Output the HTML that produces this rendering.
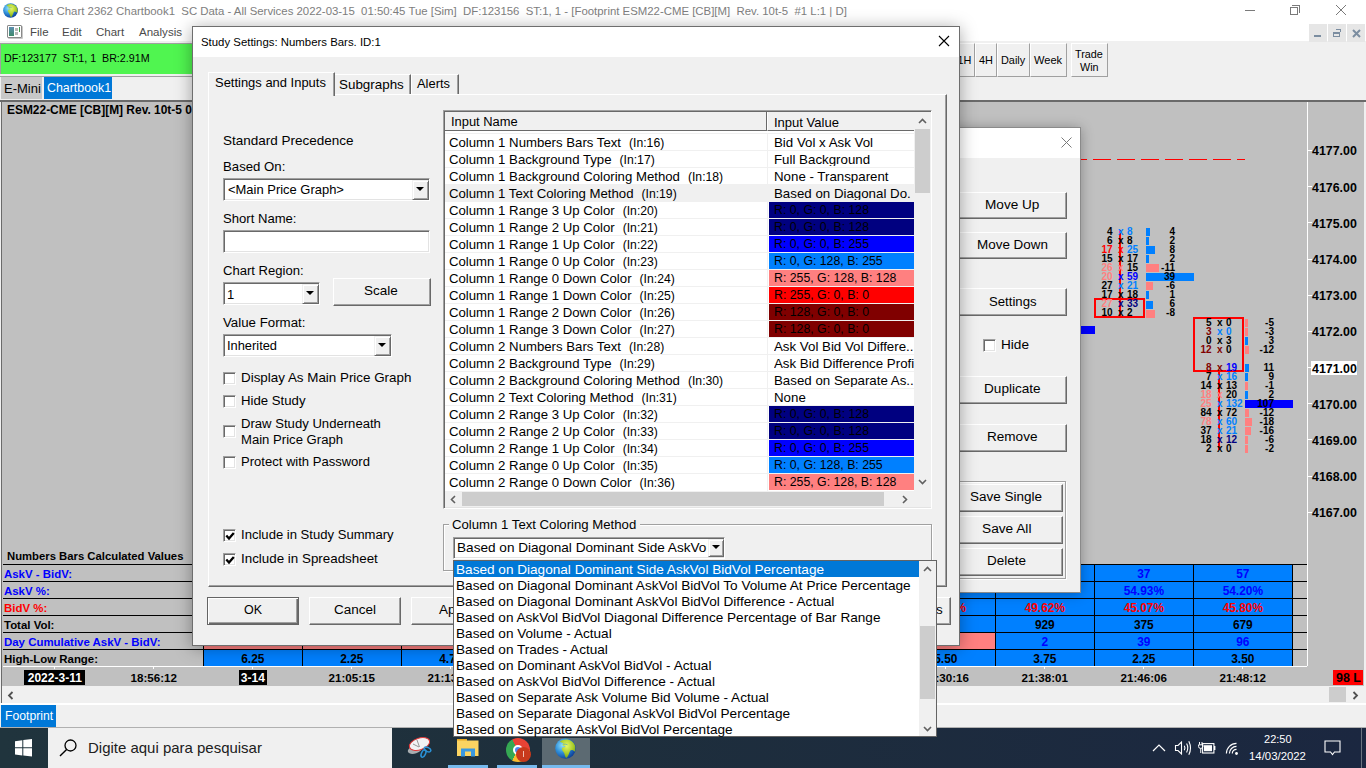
<!DOCTYPE html>
<html><head><meta charset="utf-8">
<style>
*{margin:0;padding:0;box-sizing:border-box}
html,body{width:1366px;height:768px;overflow:hidden;background:#f0f0f0;font-family:"Liberation Sans",sans-serif;color:#000}
.a{position:absolute}
.t{position:absolute;white-space:pre;line-height:1}
.b{font-weight:bold}
.btn{background:#f0f0f0;border-left:1px solid #fff;border-top:1px solid #fff;border-right:1px solid #696969;border-bottom:1px solid #696969;box-shadow:inset -1px -1px 0 #a0a0a0}
.cmb{background:#fff;border-left:1px solid #a0a0a0;border-top:1px solid #a0a0a0;border-right:1px solid #fff;border-bottom:1px solid #fff;box-shadow:inset 1px 1px 0 #696969,inset -1px -1px 0 #e3e3e3}
.dbtn{background:#f0f0f0;border-left:1px solid #f0f0f0;border-top:1px solid #f0f0f0;border-right:1px solid #696969;border-bottom:1px solid #696969;box-shadow:inset 1px 1px 0 #fff,inset -1px -1px 0 #a0a0a0}
.cb{width:13px;height:13px;background:#fff;border-left:1px solid #a0a0a0;border-top:1px solid #a0a0a0;border-right:1px solid #fff;border-bottom:1px solid #fff;box-shadow:inset 1px 1px 0 #696969,inset -1px -1px 0 #e3e3e3}
</style></head><body>
<!-- ===== MAIN WINDOW ===== -->
<div class="a" style="left:0;top:0;width:1366px;height:22px;background:#fff"></div>
<div class="t" id="title" style="left:23px;top:6px;font-size:11.4px;color:#7e7e7e">Sierra Chart 2362 Chartbook1  SC Data - All Services 2022-03-15  01:50:45 Tue [Sim]  DF:123156  ST:1, 1 - [Footprint ESM22-CME [CB][M]  Rev. 10t-5  #1 L:1 | D]</div>
<!-- menu -->
<div class="a" style="left:0;top:22px;width:1366px;height:21px;background:#fff"></div>
<div class="a" style="left:0;top:43px;width:1366px;height:1px;background:#a0a0a0"></div>
<div class="t" style="left:30px;top:27px;font-size:11.5px;color:#4a4a4a">File</div>
<div class="t" style="left:62px;top:27px;font-size:11.5px;color:#4a4a4a">Edit</div>
<div class="t" style="left:96px;top:27px;font-size:11.5px;color:#4a4a4a">Chart</div>
<div class="t" style="left:139px;top:27px;font-size:11.55px;color:#4a4a4a">Analysis</div>
<!-- menu icon -->
<div class="a" style="left:7px;top:25px;width:15px;height:13px;border:1px solid #8a8a8a;border-radius:1px;background:#fff;box-shadow:1px 1px 0 #c8c8c8"></div>
<div class="a" style="left:9px;top:27px;width:5px;height:9px;background:linear-gradient(#5d8fb0,#3e8a6a)"></div>
<div class="a" style="left:15px;top:28px;width:3px;height:3px;background:#b8b8b8"></div>
<div class="a" style="left:15px;top:32px;width:3px;height:3px;background:#b8b8b8"></div>
<div class="a" style="left:19px;top:27px;width:1px;height:5px;background:#3a9a4a"></div>
<!-- globe -->
<svg class="a" style="left:2.5px;top:3px" width="15" height="15" viewBox="0 0 20 20"><defs><radialGradient id="gb2.5" cx="35%" cy="35%" r="70%"><stop offset="0" stop-color="#8fe0ff"/><stop offset=".5" stop-color="#2f8fd8"/><stop offset="1" stop-color="#0d3f98"/></radialGradient><radialGradient id="gg2.5" cx="45%" cy="35%" r="70%"><stop offset="0" stop-color="#e6f86a"/><stop offset=".6" stop-color="#a8cc2a"/><stop offset="1" stop-color="#6a9a18"/></radialGradient></defs><circle cx="10" cy="10" r="9.8" fill="url(#gb2.5)"/><path d="M4.5 3.2Q8 1 12 1.5Q17 2.5 19 7Q19.8 10 19 13Q18 12 16.5 11.5Q14.5 11 14 13Q13 16 11.5 18.5Q10 19.5 9.5 17Q9 14 7 12Q6 10.5 7 9Q8.5 8.5 10 8.5Q9 7 7.5 7.5Q6.5 6 8 5Q6 4.5 4.5 3.2Z" fill="url(#gg2.5)"/><path d="M8 6Q10 5.5 12 6.5" stroke="#3aa0d0" stroke-width=".8" fill="none" opacity=".7"/></svg>
<!-- window controls -->
<div class="a" style="left:1245px;top:10px;width:10px;height:1px;background:#7a7a7a"></div>
<div class="a" style="left:1290px;top:7px;width:8px;height:8px;border:1px solid #7a7a7a"></div>
<div class="a" style="left:1292px;top:5px;width:8px;height:8px;border-top:1px solid #7a7a7a;border-right:1px solid #7a7a7a"></div>
<svg class="a" style="left:1335px;top:4px" width="12" height="12"><path d="M1 1L11 11M11 1L1 11" stroke="#7a7a7a" stroke-width="1"/></svg>
<!-- MDI controls -->
<div class="a" style="left:0;top:41px;width:1366px;height:60px;background:#f0f0f0"></div>
<div class="a" style="left:1309px;top:24px;width:18px;height:18px;background:#e6e6e6"></div>
<div class="a" style="left:1328px;top:24px;width:18px;height:18px;background:#e6e6e6"></div>
<div class="a" style="left:1347px;top:24px;width:18px;height:18px;background:#e6e6e6"></div>
<div class="a" style="left:1314px;top:35px;width:7px;height:2px;background:#7b8da0"></div>
<div class="a" style="left:1333px;top:32px;width:7px;height:5px;border:1px solid #7b8da0;border-top-width:2px"></div>
<div class="a" style="left:1336px;top:29px;width:5px;height:3px;border-top:1px solid #7b8da0;border-right:1px solid #7b8da0"></div>
<svg class="a" style="left:1352px;top:29px" width="9" height="9"><path d="M1 1L8 8M8 1L1 8" stroke="#7b8da0" stroke-width="2"/></svg>
<!-- toolbar buttons right -->
<div class="a btn" style="left:952px;top:43px;width:23px;height:34px;box-shadow:none;border-right-color:#a0a0a0;border-bottom-color:#a0a0a0"></div>
<div class="t" style="left:957.5px;top:55px;font-size:10.9px">1H</div>
<div class="a btn" style="left:975px;top:43px;width:22px;height:34px;box-shadow:none;border-right-color:#a0a0a0;border-bottom-color:#a0a0a0"></div>
<div class="t" style="left:979px;top:55px;font-size:10.9px">4H</div>
<div class="a btn" style="left:997px;top:43px;width:33px;height:34px;box-shadow:none;border-right-color:#a0a0a0;border-bottom-color:#a0a0a0"></div>
<div class="t" style="left:1001px;top:55px;font-size:10.9px">Daily</div>
<div class="a btn" style="left:1030px;top:43px;width:37px;height:34px;box-shadow:none;border-right-color:#a0a0a0;border-bottom-color:#a0a0a0"></div>
<div class="t" style="left:1034px;top:55px;font-size:11.1px">Week</div>
<div class="a btn" style="left:1071px;top:43px;width:37px;height:34px;box-shadow:none;border-right-color:#a0a0a0;border-bottom-color:#a0a0a0"></div>
<div class="t" style="left:1075px;top:49px;font-size:10.8px">Trade</div>
<div class="t" style="left:1080px;top:62px;font-size:10.8px">Win</div>
<!-- green status -->
<div class="a" style="left:0;top:43px;width:200px;height:31px;background:#50f550;border-left:1px solid #a0a0a0;border-top:1px solid #a0a0a0"></div>
<div class="t" style="left:4px;top:53px;font-size:10.7px">DF:123177  ST:1, 1  BR:2.91M</div>
<!-- chartbook tabs -->
<div class="a" style="left:0;top:76px;width:200px;height:1px;background:#a0a0a0"></div>
<div class="a" style="left:1px;top:77px;width:41px;height:22px;background:#c8c8c8"></div>
<div class="t" style="left:4px;top:82px;font-size:13px">E-Mini</div>
<div class="a" style="left:44px;top:77px;width:68px;height:22px;background:#0078d7"></div>
<div class="t" style="left:47px;top:82px;font-size:12.4px;color:#fff">Chartbook1</div>
<!-- chart area -->
<div class="a" style="left:0;top:100px;width:1366px;height:2px;background:#6a6a6a"></div>
<div class="a" style="left:1px;top:102px;width:1363px;height:584px;background:#c0c0c0"></div>
<div class="t b" style="left:7px;top:105px;font-size:11.95px">ESM22-CME [CB][M] Rev. 10t-5 0</div>
<!-- taskbar -->
<div class="a" style="left:0;top:728px;width:1366px;height:40px;background:linear-gradient(90deg,#20343d 0%,#1e2f3c 40%,#1b2740 100%)"></div>
<!-- start -->
<svg class="a" style="left:15px;top:739px" width="18" height="18"><path d="M0 2.3L7.3 1.3V8.3H0Z M8.3 1.1L17 0V8.3H8.3Z M0 9.3H7.3V16.4L0 15.4Z M8.3 9.3H17V17.6L8.3 16.5Z" fill="#fff"/></svg>
<div class="a" style="left:48px;top:728px;width:344px;height:40px;background:#f0f0f0"></div>
<svg class="a" style="left:58px;top:738px" width="20" height="20"><circle cx="12.5" cy="7.5" r="5.5" stroke="#000" stroke-width="1.3" fill="none"/><path d="M8.6 11.4L2 18" stroke="#000" stroke-width="1.4"/></svg>
<div class="t" style="left:88px;top:740px;font-size:14.98px;color:#202020">Digite aqui para pesquisar</div>
<!-- taskbar icons -->
<svg class="a" style="left:406px;top:736px" width="26" height="24" viewBox="0 0 26 24"><ellipse cx="9" cy="13.5" rx="7.5" ry="4" fill="#a8adb0" transform="rotate(-18 9 13.5)"/><ellipse cx="13.5" cy="8" rx="10.5" ry="5.8" fill="#f2f2f4" stroke="#e03a3a" stroke-width="1" transform="rotate(-18 13.5 8)"/><path d="M11 4L13.5 11M7 8L13 11" stroke="#8a8a8a" stroke-width=".9"/><ellipse cx="17.5" cy="17.5" rx="2" ry="4" fill="none" stroke="#2a92d8" stroke-width="1.5" transform="rotate(25 17.5 17.5)"/><ellipse cx="21.5" cy="13.5" rx="3.5" ry="2" fill="none" stroke="#2a92d8" stroke-width="1.5" transform="rotate(25 21.5 13.5)"/></svg>
<svg class="a" style="left:457px;top:739px" width="22" height="18" viewBox="0 0 22 18"><rect x="0" y="0" width="10" height="3" fill="#e8a820"/><rect x="0" y="1.5" width="21.5" height="15.5" fill="#fcd462"/><path d="M4 17.5V9.5H18V17.5H14V12.5H8V17.5Z" fill="#3a98e0"/></svg>
<div class="a" style="left:506px;top:738px;width:24px;height:24px;border-radius:50%;background:conic-gradient(from -30deg,#e84335 0 120deg,#f9bb2d 120deg 240deg,#35a853 240deg 360deg)"></div>
<div class="a" style="left:513px;top:745px;width:10px;height:10px;border-radius:50%;background:#4a8af4;border:2px solid #fff"></div>
<div class="a" style="left:516px;top:747px;width:15px;height:15px;border-radius:50%;background:#c83a1c"></div>
<div class="a" style="left:523px;top:751px;width:1px;height:6px;background:#f0c0b0"></div>
<div class="a" style="left:542px;top:738px;width:48px;height:30px;background:#5c6a72"></div>
<svg class="a" style="left:555px;top:738px" width="21" height="21" viewBox="0 0 20 20"><defs><radialGradient id="gb555" cx="35%" cy="35%" r="70%"><stop offset="0" stop-color="#8fe0ff"/><stop offset=".5" stop-color="#2f8fd8"/><stop offset="1" stop-color="#0d3f98"/></radialGradient><radialGradient id="gg555" cx="45%" cy="35%" r="70%"><stop offset="0" stop-color="#e6f86a"/><stop offset=".6" stop-color="#a8cc2a"/><stop offset="1" stop-color="#6a9a18"/></radialGradient></defs><circle cx="10" cy="10" r="9.8" fill="url(#gb555)"/><path d="M4.5 3.2Q8 1 12 1.5Q17 2.5 19 7Q19.8 10 19 13Q18 12 16.5 11.5Q14.5 11 14 13Q13 16 11.5 18.5Q10 19.5 9.5 17Q9 14 7 12Q6 10.5 7 9Q8.5 8.5 10 8.5Q9 7 7.5 7.5Q6.5 6 8 5Q6 4.5 4.5 3.2Z" fill="url(#gg555)"/><path d="M8 6Q10 5.5 12 6.5" stroke="#3aa0d0" stroke-width=".8" fill="none" opacity=".7"/></svg>
<div class="a" style="left:448px;top:765px;width:40px;height:3px;background:#76b9ed"></div>
<div class="a" style="left:497px;top:765px;width:40px;height:3px;background:#76b9ed"></div>
<div class="a" style="left:542px;top:765px;width:48px;height:3px;background:#76b9ed"></div>
<!-- tray -->
<svg class="a" style="left:1152px;top:744px" width="14" height="8"><path d="M1 7L7 1L13 7" stroke="#fff" stroke-width="1.2" fill="none"/></svg>
<svg class="a" style="left:1174px;top:740px" width="19" height="16"><path d="M1.5 5.5H4L7.5 2V14L4 10.5H1.5Z" stroke="#fff" stroke-width="1.1" fill="none"/><path d="M10.3 5.8Q11.6 8 10.3 10.2M12.6 3.6Q14.9 8 12.6 12.4M14.8 1.2Q18.2 8 14.8 14.8" stroke="#fff" stroke-width="1.1" fill="none"/></svg>
<svg class="a" style="left:1198px;top:742px" width="18" height="12"><path d="M1.5 0V2.5M4 0V2.5" stroke="#fff" stroke-width="1"/><path d="M0.6 2.8H4.9V4.6Q4.9 6.4 2.75 6.4Q0.6 6.4 0.6 4.6Z" stroke="#fff" stroke-width="1" fill="none"/><path d="M2.75 6.4V11" stroke="#fff" stroke-width="1"/><rect x="4.6" y="1.6" width="11.3" height="9.4" stroke="#fff" stroke-width="1.1" fill="none"/><rect x="6" y="3.2" width="8" height="6" fill="#fff"/><rect x="16" y="4" width="1.4" height="4" fill="#fff"/></svg>
<svg class="a" style="left:1225px;top:742px" width="14" height="14"><circle cx="11.5" cy="11.5" r="1.4" fill="#fff"/><path d="M7.3 11.5A4.2 4.2 0 0 1 11.5 7.3M4.4 11.5A7.1 7.1 0 0 1 11.5 4.4M1.4 11.5A10.1 10.1 0 0 1 11.5 1.4" stroke="#fff" stroke-width="1.15" fill="none"/></svg>
<div class="t" style="left:1264px;top:734px;font-size:11.03px;color:#fff">22:50</div>
<div class="t" style="left:1249px;top:751px;font-size:11.39px;color:#fff">14/03/2022</div>
<svg class="a" style="left:1324px;top:740px" width="18" height="17"><path d="M1 1H16V12H10.5L8.5 14.5L6.5 12H1Z" stroke="#fff" stroke-width="1.1" fill="none"/></svg>
<div class="a" style="left:1361px;top:728px;width:1px;height:40px;background:#6a7480"></div>

<!-- ===== CHART CONTENT ===== -->
<div class="a" style="left:1307px;top:102px;width:1px;height:564px;background:#fff"></div>
<div class="a" style="left:1308px;top:150.0px;width:4px;height:1px;background:#fff"></div>
<div class="t b" style="left:1312px;top:145.4px;font-size:12.4px">4177.00</div>
<div class="a" style="left:1308px;top:186.2px;width:4px;height:1px;background:#fff"></div>
<div class="t b" style="left:1312px;top:181.6px;font-size:12.4px">4176.00</div>
<div class="a" style="left:1308px;top:222.4px;width:4px;height:1px;background:#fff"></div>
<div class="t b" style="left:1312px;top:217.8px;font-size:12.4px">4175.00</div>
<div class="a" style="left:1308px;top:258.5px;width:4px;height:1px;background:#fff"></div>
<div class="t b" style="left:1312px;top:254.0px;font-size:12.4px">4174.00</div>
<div class="a" style="left:1308px;top:294.7px;width:4px;height:1px;background:#fff"></div>
<div class="t b" style="left:1312px;top:290.2px;font-size:12.4px">4173.00</div>
<div class="a" style="left:1308px;top:330.9px;width:4px;height:1px;background:#fff"></div>
<div class="t b" style="left:1312px;top:326.3px;font-size:12.4px">4172.00</div>
<div class="a" style="left:1308px;top:367.1px;width:4px;height:1px;background:#fff"></div>
<div class="a" style="left:1311px;top:360.6px;width:46px;height:14px;background:#fff"></div>
<div class="t b" style="left:1312px;top:362.5px;font-size:12.4px">4171.00</div>
<div class="a" style="left:1308px;top:403.3px;width:4px;height:1px;background:#fff"></div>
<div class="t b" style="left:1312px;top:398.7px;font-size:12.4px">4170.00</div>
<div class="a" style="left:1308px;top:439.4px;width:4px;height:1px;background:#fff"></div>
<div class="t b" style="left:1312px;top:434.9px;font-size:12.4px">4169.00</div>
<div class="a" style="left:1308px;top:475.6px;width:4px;height:1px;background:#fff"></div>
<div class="t b" style="left:1312px;top:471.1px;font-size:12.4px">4168.00</div>
<div class="a" style="left:1308px;top:511.8px;width:4px;height:1px;background:#fff"></div>
<div class="t b" style="left:1312px;top:507.2px;font-size:12.4px">4167.00</div>
<div class="a" style="left:1069px;top:159px;width:176px;height:1.4px;background:repeating-linear-gradient(90deg,#f00 0,#f00 18px,transparent 18px,transparent 24px)"></div>
<div class="a" style="left:1070px;top:326px;width:25px;height:8px;background:#0000ff"></div>
<div class="a" style="left:1146px;top:228.1px;width:4px;height:8px;background:#0080ff"></div>
<div class="a" style="left:1146px;top:237.1px;width:3px;height:8px;background:#0080ff"></div>
<div class="a" style="left:1146px;top:246.2px;width:9px;height:8px;background:#0080ff"></div>
<div class="a" style="left:1146px;top:255.2px;width:3px;height:8px;background:#0080ff"></div>
<div class="a" style="left:1146px;top:264.3px;width:13px;height:8px;background:#ff8080"></div>
<div class="a" style="left:1146px;top:273.3px;width:48px;height:8px;background:#0080ff"></div>
<div class="a" style="left:1146px;top:282.4px;width:7px;height:8px;background:#ff8080"></div>
<div class="a" style="left:1146px;top:291.4px;width:3px;height:8px;background:#0080ff"></div>
<div class="a" style="left:1146px;top:300.5px;width:7px;height:8px;background:#0080ff"></div>
<div class="a" style="left:1146px;top:309.5px;width:9px;height:8px;background:#ff8080"></div>
<div class="a" style="left:1119px;top:230px;width:2px;height:88px;background:#ff0000"></div>
<div class="a" style="left:1094px;top:298px;width:51px;height:20px;border:2px solid #ff0000"></div>
<div class="t b" style="left:1062.5px;width:50px;text-align:right;top:227.0px;font-size:10px;color:#000">4</div>
<div class="t b" style="left:1118px;top:227.0px;font-size:10px;color:#0080ff">x</div>
<div class="t b" style="left:1127px;top:227.0px;font-size:10px;color:#0080ff">8</div>
<div class="t b" style="left:1125px;width:50px;text-align:right;top:227.0px;font-size:10px;color:#000">4</div>
<div class="t b" style="left:1062.5px;width:50px;text-align:right;top:236.1px;font-size:10px;color:#000">6</div>
<div class="t b" style="left:1118px;top:236.1px;font-size:10px;color:#000">x</div>
<div class="t b" style="left:1127px;top:236.1px;font-size:10px;color:#000">8</div>
<div class="t b" style="left:1125px;width:50px;text-align:right;top:236.1px;font-size:10px;color:#000">2</div>
<div class="t b" style="left:1062.5px;width:50px;text-align:right;top:245.1px;font-size:10px;color:#ff0000">17</div>
<div class="t b" style="left:1118px;top:245.1px;font-size:10px;color:#ff0000">x</div>
<div class="t b" style="left:1127px;top:245.1px;font-size:10px;color:#0080ff">25</div>
<div class="t b" style="left:1125px;width:50px;text-align:right;top:245.1px;font-size:10px;color:#000">8</div>
<div class="t b" style="left:1062.5px;width:50px;text-align:right;top:254.2px;font-size:10px;color:#000">15</div>
<div class="t b" style="left:1118px;top:254.2px;font-size:10px;color:#000">x</div>
<div class="t b" style="left:1127px;top:254.2px;font-size:10px;color:#000">17</div>
<div class="t b" style="left:1125px;width:50px;text-align:right;top:254.2px;font-size:10px;color:#000">2</div>
<div class="t b" style="left:1062.5px;width:50px;text-align:right;top:263.2px;font-size:10px;color:#ff8080">26</div>
<div class="t b" style="left:1118px;top:263.2px;font-size:10px;color:#ff8080">x</div>
<div class="t b" style="left:1127px;top:263.2px;font-size:10px;color:#000">15</div>
<div class="t b" style="left:1125px;width:50px;text-align:right;top:263.2px;font-size:10px;color:#000">-11</div>
<div class="t b" style="left:1062.5px;width:50px;text-align:right;top:272.2px;font-size:10px;color:#ff8080">20</div>
<div class="t b" style="left:1118px;top:272.2px;font-size:10px;color:#0000ff">x</div>
<div class="t b" style="left:1127px;top:272.2px;font-size:10px;color:#0000ff">59</div>
<div class="t b" style="left:1125px;width:50px;text-align:right;top:272.2px;font-size:10px;color:#000">39</div>
<div class="t b" style="left:1062.5px;width:50px;text-align:right;top:281.3px;font-size:10px;color:#000">27</div>
<div class="t b" style="left:1118px;top:281.3px;font-size:10px;color:#0080ff">x</div>
<div class="t b" style="left:1127px;top:281.3px;font-size:10px;color:#0080ff">21</div>
<div class="t b" style="left:1125px;width:50px;text-align:right;top:281.3px;font-size:10px;color:#000">-6</div>
<div class="t b" style="left:1062.5px;width:50px;text-align:right;top:290.3px;font-size:10px;color:#000">17</div>
<div class="t b" style="left:1118px;top:290.3px;font-size:10px;color:#000">x</div>
<div class="t b" style="left:1127px;top:290.3px;font-size:10px;color:#000">18</div>
<div class="t b" style="left:1125px;width:50px;text-align:right;top:290.3px;font-size:10px;color:#000">1</div>
<div class="t b" style="left:1062.5px;width:50px;text-align:right;top:299.4px;font-size:10px;color:#ff8080">27</div>
<div class="t b" style="left:1118px;top:299.4px;font-size:10px;color:#000080">x</div>
<div class="t b" style="left:1127px;top:299.4px;font-size:10px;color:#000080">33</div>
<div class="t b" style="left:1125px;width:50px;text-align:right;top:299.4px;font-size:10px;color:#000">6</div>
<div class="t b" style="left:1062.5px;width:50px;text-align:right;top:308.4px;font-size:10px;color:#000">10</div>
<div class="t b" style="left:1118px;top:308.4px;font-size:10px;color:#000">x</div>
<div class="t b" style="left:1127px;top:308.4px;font-size:10px;color:#000">2</div>
<div class="t b" style="left:1125px;width:50px;text-align:right;top:308.4px;font-size:10px;color:#000">-8</div>
<div class="a" style="left:1245px;top:318.6px;width:3px;height:8px;background:#ff8080"></div>
<div class="a" style="left:1245px;top:327.6px;width:3px;height:8px;background:#ff8080"></div>
<div class="a" style="left:1245px;top:336.6px;width:3px;height:8px;background:#0080ff"></div>
<div class="a" style="left:1245px;top:345.7px;width:4px;height:8px;background:#ff8080"></div>
<div class="a" style="left:1245px;top:363.8px;width:4px;height:8px;background:#0080ff"></div>
<div class="a" style="left:1245px;top:372.8px;width:3px;height:8px;background:#0080ff"></div>
<div class="a" style="left:1245px;top:381.9px;width:3px;height:8px;background:#ff8080"></div>
<div class="a" style="left:1245px;top:390.9px;width:3px;height:8px;background:#0080ff"></div>
<div class="a" style="left:1245px;top:400.0px;width:48px;height:8px;background:#0000ff"></div>
<div class="a" style="left:1245px;top:409.0px;width:4px;height:8px;background:#ff8080"></div>
<div class="a" style="left:1245px;top:418.1px;width:7px;height:8px;background:#ff8080"></div>
<div class="a" style="left:1245px;top:427.1px;width:6px;height:8px;background:#ff8080"></div>
<div class="a" style="left:1245px;top:436.1px;width:3px;height:8px;background:#ff8080"></div>
<div class="a" style="left:1245px;top:445.2px;width:3px;height:8px;background:#ff8080"></div>
<div class="a" style="left:1218px;top:371px;width:2px;height:79px;background:#ff0000"></div>
<div class="a" style="left:1193px;top:317px;width:51px;height:55px;border:2px solid #ff0000"></div>
<div class="t b" style="left:1161.5px;width:50px;text-align:right;top:317.5px;font-size:10px;color:#000">5</div>
<div class="t b" style="left:1217px;top:317.5px;font-size:10px;color:#000">x</div>
<div class="t b" style="left:1226px;top:317.5px;font-size:10px;color:#000">0</div>
<div class="t b" style="left:1224px;width:50px;text-align:right;top:317.5px;font-size:10px;color:#000">-5</div>
<div class="t b" style="left:1161.5px;width:50px;text-align:right;top:326.5px;font-size:10px;color:#800000">3</div>
<div class="t b" style="left:1217px;top:326.5px;font-size:10px;color:#0080ff">x</div>
<div class="t b" style="left:1226px;top:326.5px;font-size:10px;color:#0080ff">0</div>
<div class="t b" style="left:1224px;width:50px;text-align:right;top:326.5px;font-size:10px;color:#000">-3</div>
<div class="t b" style="left:1161.5px;width:50px;text-align:right;top:335.6px;font-size:10px;color:#000">0</div>
<div class="t b" style="left:1217px;top:335.6px;font-size:10px;color:#000">x</div>
<div class="t b" style="left:1226px;top:335.6px;font-size:10px;color:#000">3</div>
<div class="t b" style="left:1224px;width:50px;text-align:right;top:335.6px;font-size:10px;color:#000">3</div>
<div class="t b" style="left:1161.5px;width:50px;text-align:right;top:344.6px;font-size:10px;color:#800000">12</div>
<div class="t b" style="left:1217px;top:344.6px;font-size:10px;color:#800000">x</div>
<div class="t b" style="left:1226px;top:344.6px;font-size:10px;color:#000">0</div>
<div class="t b" style="left:1224px;width:50px;text-align:right;top:344.6px;font-size:10px;color:#000">-12</div>
<div class="t b" style="left:1161.5px;width:50px;text-align:right;top:362.7px;font-size:10px;color:#800000">8</div>
<div class="t b" style="left:1217px;top:362.7px;font-size:10px;color:#800000">x</div>
<div class="t b" style="left:1226px;top:362.7px;font-size:10px;color:#0000ff">19</div>
<div class="t b" style="left:1224px;width:50px;text-align:right;top:362.7px;font-size:10px;color:#000">11</div>
<div class="t b" style="left:1161.5px;width:50px;text-align:right;top:371.7px;font-size:10px;color:#000">7</div>
<div class="t b" style="left:1217px;top:371.7px;font-size:10px;color:#0080ff">x</div>
<div class="t b" style="left:1226px;top:371.7px;font-size:10px;color:#0080ff">16</div>
<div class="t b" style="left:1224px;width:50px;text-align:right;top:371.7px;font-size:10px;color:#000">9</div>
<div class="t b" style="left:1161.5px;width:50px;text-align:right;top:380.8px;font-size:10px;color:#000">14</div>
<div class="t b" style="left:1217px;top:380.8px;font-size:10px;color:#000">x</div>
<div class="t b" style="left:1226px;top:380.8px;font-size:10px;color:#000">13</div>
<div class="t b" style="left:1224px;width:50px;text-align:right;top:380.8px;font-size:10px;color:#000">-1</div>
<div class="t b" style="left:1161.5px;width:50px;text-align:right;top:389.8px;font-size:10px;color:#ff8080">18</div>
<div class="t b" style="left:1217px;top:389.8px;font-size:10px;color:#ff8080">x</div>
<div class="t b" style="left:1226px;top:389.8px;font-size:10px;color:#000">20</div>
<div class="t b" style="left:1224px;width:50px;text-align:right;top:389.8px;font-size:10px;color:#000">2</div>
<div class="t b" style="left:1161.5px;width:50px;text-align:right;top:398.9px;font-size:10px;color:#ff8080">25</div>
<div class="t b" style="left:1217px;top:398.9px;font-size:10px;color:#0080ff">x</div>
<div class="t b" style="left:1226px;top:398.9px;font-size:10px;color:#0080ff">132</div>
<div class="t b" style="left:1224px;width:50px;text-align:right;top:398.9px;font-size:10px;color:#000">107</div>
<div class="t b" style="left:1161.5px;width:50px;text-align:right;top:407.9px;font-size:10px;color:#000">84</div>
<div class="t b" style="left:1217px;top:407.9px;font-size:10px;color:#000">x</div>
<div class="t b" style="left:1226px;top:407.9px;font-size:10px;color:#000">72</div>
<div class="t b" style="left:1224px;width:50px;text-align:right;top:407.9px;font-size:10px;color:#000">-12</div>
<div class="t b" style="left:1161.5px;width:50px;text-align:right;top:417.0px;font-size:10px;color:#ff8080">78</div>
<div class="t b" style="left:1217px;top:417.0px;font-size:10px;color:#0080ff">x</div>
<div class="t b" style="left:1226px;top:417.0px;font-size:10px;color:#0080ff">60</div>
<div class="t b" style="left:1224px;width:50px;text-align:right;top:417.0px;font-size:10px;color:#000">-18</div>
<div class="t b" style="left:1161.5px;width:50px;text-align:right;top:426.0px;font-size:10px;color:#000">37</div>
<div class="t b" style="left:1217px;top:426.0px;font-size:10px;color:#0080ff">x</div>
<div class="t b" style="left:1226px;top:426.0px;font-size:10px;color:#0080ff">21</div>
<div class="t b" style="left:1224px;width:50px;text-align:right;top:426.0px;font-size:10px;color:#000">-16</div>
<div class="t b" style="left:1161.5px;width:50px;text-align:right;top:435.1px;font-size:10px;color:#000">18</div>
<div class="t b" style="left:1217px;top:435.1px;font-size:10px;color:#000080">x</div>
<div class="t b" style="left:1226px;top:435.1px;font-size:10px;color:#000080">12</div>
<div class="t b" style="left:1224px;width:50px;text-align:right;top:435.1px;font-size:10px;color:#000">-6</div>
<div class="t b" style="left:1161.5px;width:50px;text-align:right;top:444.1px;font-size:10px;color:#000">2</div>
<div class="t b" style="left:1217px;top:444.1px;font-size:10px;color:#000">x</div>
<div class="t b" style="left:1226px;top:444.1px;font-size:10px;color:#000">0</div>
<div class="t b" style="left:1224px;width:50px;text-align:right;top:444.1px;font-size:10px;color:#000">-2</div>
<div class="a" style="left:3px;top:564px;width:1304px;height:1px;background:#000"></div>
<div class="a" style="left:3px;top:581px;width:1304px;height:1px;background:#000"></div>
<div class="a" style="left:3px;top:598px;width:1304px;height:1px;background:#000"></div>
<div class="a" style="left:3px;top:615px;width:1304px;height:1px;background:#000"></div>
<div class="a" style="left:3px;top:632px;width:1304px;height:1px;background:#000"></div>
<div class="a" style="left:3px;top:649px;width:1304px;height:1px;background:#000"></div>
<div class="t b" style="left:7px;top:551px;font-size:11.3px">Numbers Bars Calculated Values</div>
<div class="t b" style="left:4px;top:569px;font-size:11.45px;color:#0000ff">AskV - BidV:</div>
<div class="t b" style="left:4px;top:586px;font-size:11.45px;color:#0000ff">AskV %:</div>
<div class="t b" style="left:4px;top:603px;font-size:11.45px;color:#ff0000">BidV %:</div>
<div class="t b" style="left:4px;top:620px;font-size:11.45px;color:#000">Total Vol:</div>
<div class="t b" style="left:4px;top:637px;font-size:11.45px;color:#0000ff">Day Cumulative AskV - BidV:</div>
<div class="t b" style="left:4px;top:654px;font-size:11.45px;color:#000">High-Low Range:</div>
<div class="a" style="left:204.3px;top:565px;width:98.0px;height:16px;background:#0080ff"></div>
<div class="a" style="left:204.3px;top:582px;width:98.0px;height:16px;background:#0080ff"></div>
<div class="a" style="left:204.3px;top:599px;width:98.0px;height:16px;background:#0080ff"></div>
<div class="a" style="left:204.3px;top:616px;width:98.0px;height:16px;background:#0080ff"></div>
<div class="a" style="left:204.3px;top:633px;width:98.0px;height:16px;background:#ff8080"></div>
<div class="a" style="left:204.3px;top:650px;width:98.0px;height:16px;background:#0080ff"></div>
<div class="a" style="left:303.3px;top:565px;width:98.0px;height:16px;background:#0080ff"></div>
<div class="a" style="left:303.3px;top:582px;width:98.0px;height:16px;background:#0080ff"></div>
<div class="a" style="left:303.3px;top:599px;width:98.0px;height:16px;background:#0080ff"></div>
<div class="a" style="left:303.3px;top:616px;width:98.0px;height:16px;background:#0080ff"></div>
<div class="a" style="left:303.3px;top:633px;width:98.0px;height:16px;background:#ff8080"></div>
<div class="a" style="left:303.3px;top:650px;width:98.0px;height:16px;background:#0080ff"></div>
<div class="a" style="left:402.3px;top:565px;width:98.0px;height:16px;background:#0080ff"></div>
<div class="a" style="left:402.3px;top:582px;width:98.0px;height:16px;background:#0080ff"></div>
<div class="a" style="left:402.3px;top:599px;width:98.0px;height:16px;background:#0080ff"></div>
<div class="a" style="left:402.3px;top:616px;width:98.0px;height:16px;background:#0080ff"></div>
<div class="a" style="left:402.3px;top:633px;width:98.0px;height:16px;background:#ff8080"></div>
<div class="a" style="left:402.3px;top:650px;width:98.0px;height:16px;background:#0080ff"></div>
<div class="a" style="left:501.3px;top:565px;width:98.0px;height:16px;background:#0080ff"></div>
<div class="a" style="left:501.3px;top:582px;width:98.0px;height:16px;background:#0080ff"></div>
<div class="a" style="left:501.3px;top:599px;width:98.0px;height:16px;background:#0080ff"></div>
<div class="a" style="left:501.3px;top:616px;width:98.0px;height:16px;background:#0080ff"></div>
<div class="a" style="left:501.3px;top:633px;width:98.0px;height:16px;background:#0080ff"></div>
<div class="a" style="left:501.3px;top:650px;width:98.0px;height:16px;background:#0080ff"></div>
<div class="a" style="left:600.3px;top:565px;width:98.0px;height:16px;background:#0080ff"></div>
<div class="a" style="left:600.3px;top:582px;width:98.0px;height:16px;background:#0080ff"></div>
<div class="a" style="left:600.3px;top:599px;width:98.0px;height:16px;background:#0080ff"></div>
<div class="a" style="left:600.3px;top:616px;width:98.0px;height:16px;background:#0080ff"></div>
<div class="a" style="left:600.3px;top:633px;width:98.0px;height:16px;background:#0080ff"></div>
<div class="a" style="left:600.3px;top:650px;width:98.0px;height:16px;background:#0080ff"></div>
<div class="a" style="left:699.3px;top:565px;width:98.0px;height:16px;background:#0080ff"></div>
<div class="a" style="left:699.3px;top:582px;width:98.0px;height:16px;background:#0080ff"></div>
<div class="a" style="left:699.3px;top:599px;width:98.0px;height:16px;background:#0080ff"></div>
<div class="a" style="left:699.3px;top:616px;width:98.0px;height:16px;background:#0080ff"></div>
<div class="a" style="left:699.3px;top:633px;width:98.0px;height:16px;background:#0080ff"></div>
<div class="a" style="left:699.3px;top:650px;width:98.0px;height:16px;background:#0080ff"></div>
<div class="a" style="left:798.3px;top:565px;width:98.0px;height:16px;background:#0080ff"></div>
<div class="a" style="left:798.3px;top:582px;width:98.0px;height:16px;background:#0080ff"></div>
<div class="a" style="left:798.3px;top:599px;width:98.0px;height:16px;background:#0080ff"></div>
<div class="a" style="left:798.3px;top:616px;width:98.0px;height:16px;background:#0080ff"></div>
<div class="a" style="left:798.3px;top:633px;width:98.0px;height:16px;background:#0080ff"></div>
<div class="a" style="left:798.3px;top:650px;width:98.0px;height:16px;background:#0080ff"></div>
<div class="a" style="left:897.3px;top:565px;width:98.0px;height:16px;background:#0080ff"></div>
<div class="a" style="left:897.3px;top:582px;width:98.0px;height:16px;background:#0080ff"></div>
<div class="a" style="left:897.3px;top:599px;width:98.0px;height:16px;background:#0080ff"></div>
<div class="a" style="left:897.3px;top:616px;width:98.0px;height:16px;background:#0080ff"></div>
<div class="a" style="left:897.3px;top:633px;width:98.0px;height:16px;background:#ff8080"></div>
<div class="a" style="left:897.3px;top:650px;width:98.0px;height:16px;background:#0080ff"></div>
<div class="a" style="left:996.3px;top:565px;width:98.0px;height:16px;background:#0080ff"></div>
<div class="a" style="left:996.3px;top:582px;width:98.0px;height:16px;background:#0080ff"></div>
<div class="a" style="left:996.3px;top:599px;width:98.0px;height:16px;background:#0080ff"></div>
<div class="a" style="left:996.3px;top:616px;width:98.0px;height:16px;background:#0080ff"></div>
<div class="a" style="left:996.3px;top:633px;width:98.0px;height:16px;background:#0080ff"></div>
<div class="a" style="left:996.3px;top:650px;width:98.0px;height:16px;background:#0080ff"></div>
<div class="a" style="left:1095.3px;top:565px;width:98.0px;height:16px;background:#0080ff"></div>
<div class="a" style="left:1095.3px;top:582px;width:98.0px;height:16px;background:#0080ff"></div>
<div class="a" style="left:1095.3px;top:599px;width:98.0px;height:16px;background:#0080ff"></div>
<div class="a" style="left:1095.3px;top:616px;width:98.0px;height:16px;background:#0080ff"></div>
<div class="a" style="left:1095.3px;top:633px;width:98.0px;height:16px;background:#0080ff"></div>
<div class="a" style="left:1095.3px;top:650px;width:98.0px;height:16px;background:#0080ff"></div>
<div class="a" style="left:1194.3px;top:565px;width:98.0px;height:16px;background:#0080ff"></div>
<div class="a" style="left:1194.3px;top:582px;width:98.0px;height:16px;background:#0080ff"></div>
<div class="a" style="left:1194.3px;top:599px;width:98.0px;height:16px;background:#0080ff"></div>
<div class="a" style="left:1194.3px;top:616px;width:98.0px;height:16px;background:#0080ff"></div>
<div class="a" style="left:1194.3px;top:633px;width:98.0px;height:16px;background:#0080ff"></div>
<div class="a" style="left:1194.3px;top:650px;width:98.0px;height:16px;background:#0080ff"></div>
<div class="a" style="left:203.3px;top:564px;width:1px;height:102px;background:#000"></div>
<div class="a" style="left:302.3px;top:564px;width:1px;height:102px;background:#000"></div>
<div class="a" style="left:401.3px;top:564px;width:1px;height:102px;background:#000"></div>
<div class="a" style="left:500.3px;top:564px;width:1px;height:102px;background:#000"></div>
<div class="a" style="left:599.3px;top:564px;width:1px;height:102px;background:#000"></div>
<div class="a" style="left:698.3px;top:564px;width:1px;height:102px;background:#000"></div>
<div class="a" style="left:797.3px;top:564px;width:1px;height:102px;background:#000"></div>
<div class="a" style="left:896.3px;top:564px;width:1px;height:102px;background:#000"></div>
<div class="a" style="left:995.3px;top:564px;width:1px;height:102px;background:#000"></div>
<div class="a" style="left:1094.3px;top:564px;width:1px;height:102px;background:#000"></div>
<div class="a" style="left:1193.3px;top:564px;width:1px;height:102px;background:#000"></div>
<div class="a" style="left:1292.3px;top:564px;width:1px;height:102px;background:#000"></div>
<div class="t b" style="left:994.8px;width:100px;text-align:center;top:603px;font-size:11.9px;color:#ff0000">49.62%</div>
<div class="t b" style="left:994.8px;width:100px;text-align:center;top:620px;font-size:11.9px;color:#000">929</div>
<div class="t b" style="left:994.8px;width:100px;text-align:center;top:637px;font-size:11.9px;color:#0000ff">2</div>
<div class="t b" style="left:994.8px;width:100px;text-align:center;top:654px;font-size:11.9px;color:#000">3.75</div>
<div class="t b" style="left:1093.8px;width:100px;text-align:center;top:569px;font-size:11.9px;color:#0000ff">37</div>
<div class="t b" style="left:1093.8px;width:100px;text-align:center;top:586px;font-size:11.9px;color:#0000ff">54.93%</div>
<div class="t b" style="left:1093.8px;width:100px;text-align:center;top:603px;font-size:11.9px;color:#ff0000">45.07%</div>
<div class="t b" style="left:1093.8px;width:100px;text-align:center;top:620px;font-size:11.9px;color:#000">375</div>
<div class="t b" style="left:1093.8px;width:100px;text-align:center;top:637px;font-size:11.9px;color:#0000ff">39</div>
<div class="t b" style="left:1093.8px;width:100px;text-align:center;top:654px;font-size:11.9px;color:#000">2.25</div>
<div class="t b" style="left:1192.8px;width:100px;text-align:center;top:569px;font-size:11.9px;color:#0000ff">57</div>
<div class="t b" style="left:1192.8px;width:100px;text-align:center;top:586px;font-size:11.9px;color:#0000ff">54.20%</div>
<div class="t b" style="left:1192.8px;width:100px;text-align:center;top:603px;font-size:11.9px;color:#ff0000">45.80%</div>
<div class="t b" style="left:1192.8px;width:100px;text-align:center;top:620px;font-size:11.9px;color:#000">679</div>
<div class="t b" style="left:1192.8px;width:100px;text-align:center;top:637px;font-size:11.9px;color:#0000ff">96</div>
<div class="t b" style="left:1192.8px;width:100px;text-align:center;top:654px;font-size:11.9px;color:#000">3.50</div>
<div class="t b" style="left:202.8px;width:100px;text-align:center;top:654px;font-size:11.9px;color:#000">6.25</div>
<div class="t b" style="left:301.8px;width:100px;text-align:center;top:654px;font-size:11.9px;color:#000">2.25</div>
<div class="t b" style="left:400.8px;width:100px;text-align:center;top:654px;font-size:11.9px;color:#000">4.75</div>
<div class="t b" style="left:895.8px;width:100px;text-align:center;top:603px;font-size:11.9px;color:#ff0000">50.38%</div>
<div class="t b" style="left:895.8px;width:100px;text-align:center;top:654px;font-size:11.9px;color:#000">5.50</div>
<div class="a" style="left:3px;top:666px;width:1304px;height:1px;background:#fff"></div>
<div class="a" style="left:54.3px;top:666px;width:1px;height:3px;background:#fff"></div>
<div class="a" style="left:24.3px;top:670px;width:61px;height:15px;background:#000"></div>
<div class="t b" style="left:4.8px;width:100px;text-align:center;top:672px;font-size:12px;color:#fff">2022-3-11</div>
<div class="a" style="left:153.3px;top:666px;width:1px;height:3px;background:#fff"></div>
<div class="t b" style="left:103.8px;width:100px;text-align:center;top:672px;font-size:11.6px">18:56:12</div>
<div class="a" style="left:252.3px;top:666px;width:1px;height:3px;background:#fff"></div>
<div class="a" style="left:238.8px;top:670px;width:28px;height:15px;background:#000"></div>
<div class="t b" style="left:202.8px;width:100px;text-align:center;top:672px;font-size:12px;color:#fff">3-14</div>
<div class="a" style="left:351.3px;top:666px;width:1px;height:3px;background:#fff"></div>
<div class="t b" style="left:301.8px;width:100px;text-align:center;top:672px;font-size:11.6px">21:05:15</div>
<div class="a" style="left:450.3px;top:666px;width:1px;height:3px;background:#fff"></div>
<div class="t b" style="left:400.8px;width:100px;text-align:center;top:672px;font-size:11.6px">21:13:20</div>
<div class="a" style="left:945.3px;top:666px;width:1px;height:3px;background:#fff"></div>
<div class="t b" style="left:895.8px;width:100px;text-align:center;top:672px;font-size:11.6px">21:30:16</div>
<div class="a" style="left:1044.3px;top:666px;width:1px;height:3px;background:#fff"></div>
<div class="t b" style="left:994.8px;width:100px;text-align:center;top:672px;font-size:11.6px">21:38:01</div>
<div class="a" style="left:1143.3px;top:666px;width:1px;height:3px;background:#fff"></div>
<div class="t b" style="left:1093.8px;width:100px;text-align:center;top:672px;font-size:11.6px">21:46:06</div>
<div class="a" style="left:1242.3px;top:666px;width:1px;height:3px;background:#fff"></div>
<div class="t b" style="left:1192.8px;width:100px;text-align:center;top:672px;font-size:11.6px">21:48:12</div>
<div class="a" style="left:1333px;top:670px;width:30px;height:15px;background:#ff0000"></div>
<div class="t b" style="left:1336px;top:672px;font-size:12.4px">98 L</div>
<div class="a" style="left:1px;top:686px;width:1365px;height:17px;background:#f0f0f0"></div>
<svg class="a" style="left:7px;top:691px" width="7" height="9"><path d="M5.5 1L2 4.5L5.5 8" stroke="#505050" stroke-width="1.8" fill="none"/></svg>
<div class="a" style="left:1329px;top:687px;width:17px;height:15px;background:#cdcdcd"></div>
<svg class="a" style="left:1352px;top:691px" width="7" height="9"><path d="M1.5 1L5 4.5L1.5 8" stroke="#505050" stroke-width="1.8" fill="none"/></svg>
<div class="a" style="left:0;top:703px;width:1366px;height:2px;background:#fff"></div>
<div class="a" style="left:1px;top:101px;width:1px;height:602px;background:#6a6a6a"></div>
<div class="a" style="left:1px;top:705px;width:55px;height:22px;background:#0078d7"></div>
<div class="t" style="left:5px;top:710px;font-size:12.2px;color:#fff">Footprint</div>
<div class="a" style="left:0;top:727px;width:1366px;height:1px;background:#b0b0b0"></div>
<!-- ===== END CHART ===== -->
<!-- ===== DIALOG 2 ===== -->
<div class="a" style="left:900px;top:127px;width:181px;height:466px;background:#f0f0f0;border:1px solid #8a8a8a;box-shadow:0 1px 12px rgba(0,0,0,.3)"></div>
<div class="a" style="left:901px;top:128px;width:179px;height:30px;background:#fff"></div>
<svg class="a" style="left:1061px;top:137px" width="11" height="11"><path d="M0.5 0.5L10.5 10.5M10.5 0.5L0.5 10.5" stroke="#7a7a7a" stroke-width="1"/></svg>
<div class="a btn" style="left:940px;top:192px;width:127px;height:27px"></div>
<div class="t" style="left:985px;top:198px;font-size:13.6px">Move Up</div>
<div class="a btn" style="left:940px;top:232px;width:127px;height:27px"></div>
<div class="t" style="left:977px;top:238px;font-size:13.45px">Move Down</div>
<div class="a btn" style="left:940px;top:288px;width:127px;height:28px"></div>
<div class="t" style="left:989px;top:295px;font-size:13.17px">Settings</div>
<div class="a cb" style="left:983px;top:339px"></div>
<div class="t" style="left:1001px;top:338px;font-size:13.6px">Hide</div>
<div class="a btn" style="left:940px;top:376px;width:127px;height:28px"></div>
<div class="t" style="left:984px;top:382px;font-size:13.6px">Duplicate</div>
<div class="a btn" style="left:940px;top:424px;width:127px;height:28px"></div>
<div class="t" style="left:987px;top:430px;font-size:13.56px">Remove</div>
<div class="a" style="left:940px;top:481px;width:126px;height:98px;border:1px solid #a0a0a0;box-shadow:inset 1px 1px 0 #fff,1px 1px 0 #fff"></div>
<div class="a btn" style="left:940px;top:484px;width:123px;height:28px"></div>
<div class="t" style="left:970px;top:490px;font-size:13.53px">Save Single</div>
<div class="a btn" style="left:940px;top:516px;width:123px;height:28px"></div>
<div class="t" style="left:982px;top:522px;font-size:13.7px">Save All</div>
<div class="a btn" style="left:940px;top:548px;width:123px;height:28px"></div>
<div class="t" style="left:987px;top:554px;font-size:13.49px">Delete</div>
<!-- ===== MAIN DIALOG ===== -->
<div class="a" style="left:192px;top:26px;width:768px;height:620px;background:#f0f0f0;border:1px solid #6e6e6e;box-shadow:0 2px 16px rgba(0,0,0,.35)"></div>
<div class="a" style="left:193px;top:27px;width:766px;height:30px;background:#fff"></div>
<div class="t" style="left:201px;top:37px;font-size:11.4px">Study Settings: Numbers Bars. ID:1</div>
<svg class="a" style="left:938px;top:35px" width="12" height="12"><path d="M1 1L11 11M11 1L1 11" stroke="#000" stroke-width="1.1"/></svg>
<!-- tab page -->
<div class="a" style="left:208px;top:94px;width:739px;height:493px;border-left:1px solid #fff;border-top:1px solid #fff;border-right:1px solid #696969;border-bottom:1px solid #696969;box-shadow:inset -1px -1px 0 #a0a0a0"></div>
<!-- tabs -->
<div class="a" style="left:208px;top:72px;width:127px;height:24px;background:#f0f0f0;border-left:1px solid #fff;border-top:1px solid #fff;border-right:1px solid #696969;box-shadow:inset -1px 0 0 #a0a0a0"></div>
<div class="t" style="left:215px;top:77px;font-size:12.96px">Settings and Inputs</div>
<div class="a" style="left:335px;top:74px;width:76px;height:20px;border-top:1px solid #fff;border-right:1px solid #696969;box-shadow:inset -1px 0 0 #a0a0a0"></div>
<div class="t" style="left:339px;top:78px;font-size:13.4px">Subgraphs</div>
<div class="a" style="left:411px;top:74px;width:48px;height:20px;border-left:1px solid #fff;border-top:1px solid #fff;border-right:1px solid #696969;box-shadow:inset -1px 0 0 #a0a0a0"></div>
<div class="t" style="left:417px;top:78px;font-size:12.9px">Alerts</div>
<!-- left controls -->
<div class="t" style="left:223px;top:134px;font-size:13.5px">Standard Precedence</div>
<div class="t" style="left:223px;top:160px;font-size:13.2px">Based On:</div>
<div class="a cmb" style="left:223px;top:178px;width:207px;height:23px"></div>
<div class="t" style="left:228px;top:184px;font-size:12.96px">&lt;Main Price Graph&gt;</div>
<div class="a dbtn" style="left:412px;top:180px;width:17px;height:20px"></div>
<svg class="a" style="left:416px;top:187px" width="9" height="5"><path d="M0 0H8L4 4Z" fill="#000"/></svg>
<div class="t" style="left:223px;top:212px;font-size:13.1px">Short Name:</div>
<div class="a cmb" style="left:223px;top:230px;width:207px;height:23px"></div>
<div class="t" style="left:223px;top:264px;font-size:13.08px">Chart Region:</div>
<div class="a cmb" style="left:223px;top:282px;width:97px;height:23px"></div>
<div class="t" style="left:227px;top:288px;font-size:13px">1</div>
<div class="a dbtn" style="left:302px;top:284px;width:17px;height:20px"></div>
<svg class="a" style="left:306px;top:291px" width="9" height="5"><path d="M0 0H8L4 4Z" fill="#000"/></svg>
<div class="a btn" style="left:333px;top:278px;width:98px;height:28px"></div>
<div class="t" style="left:364px;top:284px;font-size:13.5px">Scale</div>
<div class="t" style="left:223px;top:316px;font-size:13.29px">Value Format:</div>
<div class="a cmb" style="left:223px;top:334px;width:169px;height:23px"></div>
<div class="t" style="left:227px;top:340px;font-size:12.85px">Inherited</div>
<div class="a dbtn" style="left:374px;top:336px;width:17px;height:20px"></div>
<svg class="a" style="left:378px;top:343px" width="9" height="5"><path d="M0 0H8L4 4Z" fill="#000"/></svg>
<!-- checkboxes -->
<div class="a cb" style="left:223px;top:372px"></div>
<div class="t" style="left:241px;top:371px;font-size:13.4px">Display As Main Price Graph</div>
<div class="a cb" style="left:223px;top:395px"></div>
<div class="t" style="left:241px;top:394px;font-size:13.2px">Hide Study</div>
<div class="a cb" style="left:223px;top:425px"></div>
<div class="t" style="left:241px;top:417px;font-size:13.12px">Draw Study Underneath</div>
<div class="t" style="left:241px;top:433px;font-size:13.12px">Main Price Graph</div>
<div class="a cb" style="left:223px;top:456px"></div>
<div class="t" style="left:241px;top:455px;font-size:13.04px">Protect with Password</div>
<div class="a cb" style="left:223px;top:529px"></div>
<svg class="a" style="left:225px;top:531px" width="10" height="10"><path d="M1.3 4.5L4 7.5L8.8 2" stroke="#000" stroke-width="2.3" fill="none"/></svg>
<div class="t" style="left:241px;top:528px;font-size:13.09px">Include in Study Summary</div>
<div class="a cb" style="left:223px;top:553px"></div>
<svg class="a" style="left:225px;top:555px" width="10" height="10"><path d="M1.3 4.5L4 7.5L8.8 2" stroke="#000" stroke-width="2.3" fill="none"/></svg>
<div class="t" style="left:241px;top:552px;font-size:13.39px">Include in Spreadsheet</div>
<!-- bottom buttons -->
<div class="a" style="left:207px;top:597px;width:92px;height:28px;background:#f0f0f0;border:1px solid #646464;box-shadow:inset 1px 1px 0 #fff,inset -1px -1px 0 #6a6a6a,inset -2px -2px 0 #a0a0a0"></div>
<div class="t" style="left:244px;top:604px;font-size:12.5px">OK</div>
<div class="a btn" style="left:309px;top:597px;width:92px;height:28px"></div>
<div class="t" style="left:334px;top:603px;font-size:13.49px">Cancel</div>
<div class="a btn" style="left:411px;top:597px;width:92px;height:28px"></div>
<div class="t" style="left:439px;top:603px;font-size:13.49px">Apply</div>
<!-- listview -->
<div class="a" style="left:443px;top:110px;width:489px;height:399px;background:#fff;border-left:1px solid #a0a0a0;border-top:1px solid #a0a0a0;border-right:1px solid #fff;border-bottom:1px solid #fff;box-shadow:inset 1px 1px 0 #696969,inset -1px -1px 0 #e3e3e3"></div>
<div class="a" style="left:445px;top:112px;width:322px;height:19px;background:#f0f0f0;border-right:1px solid #696969;border-bottom:1px solid #696969"></div>
<div class="a" style="left:767px;top:112px;width:147px;height:19px;background:#f0f0f0;border-left:1px solid #fff;border-bottom:1px solid #696969"></div>
<div class="t" style="left:451px;top:116px;font-size:12.92px">Input Name</div>
<div class="t" style="left:774px;top:116px;font-size:13.04px">Input Value</div>
<div class="a" style="left:767px;top:133px;width:1px;height:358px;background:#f0f0f0"></div>
<div class="a" style="left:445px;top:133px;width:469px;height:1px;background:#f0f0f0"></div>
<div class="t" style="left:449px;top:136px;font-size:13.2px">Column 1 Numbers Bars Text<span style="margin-left:8px;font-size:12.2px">(In:16)</span></div>
<div class="t" style="left:774px;top:136px;font-size:13.3px;width:140px;overflow:hidden">Bid Vol x Ask Vol</div>
<div class="a" style="left:445px;top:150px;width:469px;height:1px;background:#f0f0f0"></div>
<div class="t" style="left:449px;top:153px;font-size:13.2px">Column 1 Background Type<span style="margin-left:8px;font-size:12.2px">(In:17)</span></div>
<div class="t" style="left:774px;top:153px;font-size:13.3px;width:140px;overflow:hidden">Full Background</div>
<div class="a" style="left:445px;top:167px;width:469px;height:1px;background:#f0f0f0"></div>
<div class="t" style="left:449px;top:170px;font-size:13.2px">Column 1 Background Coloring Method<span style="margin-left:8px;font-size:12.2px">(In:18)</span></div>
<div class="t" style="left:774px;top:170px;font-size:13.3px;width:140px;overflow:hidden">None - Transparent</div>
<div class="a" style="left:445px;top:184px;width:469px;height:1px;background:#f0f0f0"></div>
<div class="a" style="left:445px;top:185px;width:469px;height:16px;background:#f0f0f0"></div>
<div class="t" style="left:449px;top:187px;font-size:13.2px">Column 1 Text Coloring Method<span style="margin-left:8px;font-size:12.2px">(In:19)</span></div>
<div class="t" style="left:774px;top:187px;font-size:13.3px;width:140px;overflow:hidden">Based on Diagonal Do.</div>
<div class="a" style="left:445px;top:201px;width:469px;height:1px;background:#f0f0f0"></div>
<div class="a" style="left:769px;top:202px;width:145px;height:16px;background:#000080"></div>
<div class="t" style="left:449px;top:204px;font-size:13.2px">Column 1 Range 3 Up Color<span style="margin-left:8px;font-size:12.2px">(In:20)</span></div>
<div class="t" style="left:774px;top:204px;font-size:12.3px;width:140px;overflow:hidden">R: 0, G: 0, B: 128</div>
<div class="a" style="left:445px;top:218px;width:469px;height:1px;background:#f0f0f0"></div>
<div class="a" style="left:769px;top:219px;width:145px;height:16px;background:#000080"></div>
<div class="t" style="left:449px;top:221px;font-size:13.2px">Column 1 Range 2 Up Color<span style="margin-left:8px;font-size:12.2px">(In:21)</span></div>
<div class="t" style="left:774px;top:221px;font-size:12.3px;width:140px;overflow:hidden">R: 0, G: 0, B: 128</div>
<div class="a" style="left:445px;top:235px;width:469px;height:1px;background:#f0f0f0"></div>
<div class="a" style="left:769px;top:236px;width:145px;height:16px;background:#0000ff"></div>
<div class="t" style="left:449px;top:238px;font-size:13.2px">Column 1 Range 1 Up Color<span style="margin-left:8px;font-size:12.2px">(In:22)</span></div>
<div class="t" style="left:774px;top:238px;font-size:12.3px;width:140px;overflow:hidden">R: 0, G: 0, B: 255</div>
<div class="a" style="left:445px;top:252px;width:469px;height:1px;background:#f0f0f0"></div>
<div class="a" style="left:769px;top:253px;width:145px;height:16px;background:#0080ff"></div>
<div class="t" style="left:449px;top:255px;font-size:13.2px">Column 1 Range 0 Up Color<span style="margin-left:8px;font-size:12.2px">(In:23)</span></div>
<div class="t" style="left:774px;top:255px;font-size:12.3px;width:140px;overflow:hidden">R: 0, G: 128, B: 255</div>
<div class="a" style="left:445px;top:269px;width:469px;height:1px;background:#f0f0f0"></div>
<div class="a" style="left:769px;top:270px;width:145px;height:16px;background:#ff8080"></div>
<div class="t" style="left:449px;top:272px;font-size:13.2px">Column 1 Range 0 Down Color<span style="margin-left:8px;font-size:12.2px">(In:24)</span></div>
<div class="t" style="left:774px;top:272px;font-size:12.3px;width:140px;overflow:hidden">R: 255, G: 128, B: 128</div>
<div class="a" style="left:445px;top:286px;width:469px;height:1px;background:#f0f0f0"></div>
<div class="a" style="left:769px;top:287px;width:145px;height:16px;background:#ff0000"></div>
<div class="t" style="left:449px;top:289px;font-size:13.2px">Column 1 Range 1 Down Color<span style="margin-left:8px;font-size:12.2px">(In:25)</span></div>
<div class="t" style="left:774px;top:289px;font-size:12.3px;width:140px;overflow:hidden">R: 255, G: 0, B: 0</div>
<div class="a" style="left:445px;top:303px;width:469px;height:1px;background:#f0f0f0"></div>
<div class="a" style="left:769px;top:304px;width:145px;height:16px;background:#800000"></div>
<div class="t" style="left:449px;top:306px;font-size:13.2px">Column 1 Range 2 Down Color<span style="margin-left:8px;font-size:12.2px">(In:26)</span></div>
<div class="t" style="left:774px;top:306px;font-size:12.3px;width:140px;overflow:hidden">R: 128, G: 0, B: 0</div>
<div class="a" style="left:445px;top:320px;width:469px;height:1px;background:#f0f0f0"></div>
<div class="a" style="left:769px;top:321px;width:145px;height:16px;background:#800000"></div>
<div class="t" style="left:449px;top:323px;font-size:13.2px">Column 1 Range 3 Down Color<span style="margin-left:8px;font-size:12.2px">(In:27)</span></div>
<div class="t" style="left:774px;top:323px;font-size:12.3px;width:140px;overflow:hidden">R: 128, G: 0, B: 0</div>
<div class="a" style="left:445px;top:337px;width:469px;height:1px;background:#f0f0f0"></div>
<div class="t" style="left:449px;top:340px;font-size:13.2px">Column 2 Numbers Bars Text<span style="margin-left:8px;font-size:12.2px">(In:28)</span></div>
<div class="t" style="left:774px;top:340px;font-size:13.3px;width:140px;overflow:hidden">Ask Vol Bid Vol Differe..</div>
<div class="a" style="left:445px;top:354px;width:469px;height:1px;background:#f0f0f0"></div>
<div class="t" style="left:449px;top:357px;font-size:13.2px">Column 2 Background Type<span style="margin-left:8px;font-size:12.2px">(In:29)</span></div>
<div class="t" style="left:774px;top:357px;font-size:13.3px;width:140px;overflow:hidden">Ask Bid Difference Profi</div>
<div class="a" style="left:445px;top:371px;width:469px;height:1px;background:#f0f0f0"></div>
<div class="t" style="left:449px;top:374px;font-size:13.2px">Column 2 Background Coloring Method<span style="margin-left:8px;font-size:12.2px">(In:30)</span></div>
<div class="t" style="left:774px;top:374px;font-size:13.3px;width:140px;overflow:hidden">Based on Separate As..</div>
<div class="a" style="left:445px;top:388px;width:469px;height:1px;background:#f0f0f0"></div>
<div class="t" style="left:449px;top:391px;font-size:13.2px">Column 2 Text Coloring Method<span style="margin-left:8px;font-size:12.2px">(In:31)</span></div>
<div class="t" style="left:774px;top:391px;font-size:13.3px;width:140px;overflow:hidden">None</div>
<div class="a" style="left:445px;top:405px;width:469px;height:1px;background:#f0f0f0"></div>
<div class="a" style="left:769px;top:406px;width:145px;height:16px;background:#000080"></div>
<div class="t" style="left:449px;top:408px;font-size:13.2px">Column 2 Range 3 Up Color<span style="margin-left:8px;font-size:12.2px">(In:32)</span></div>
<div class="t" style="left:774px;top:408px;font-size:12.3px;width:140px;overflow:hidden">R: 0, G: 0, B: 128</div>
<div class="a" style="left:445px;top:422px;width:469px;height:1px;background:#f0f0f0"></div>
<div class="a" style="left:769px;top:423px;width:145px;height:16px;background:#000080"></div>
<div class="t" style="left:449px;top:425px;font-size:13.2px">Column 2 Range 2 Up Color<span style="margin-left:8px;font-size:12.2px">(In:33)</span></div>
<div class="t" style="left:774px;top:425px;font-size:12.3px;width:140px;overflow:hidden">R: 0, G: 0, B: 128</div>
<div class="a" style="left:445px;top:439px;width:469px;height:1px;background:#f0f0f0"></div>
<div class="a" style="left:769px;top:440px;width:145px;height:16px;background:#0000ff"></div>
<div class="t" style="left:449px;top:442px;font-size:13.2px">Column 2 Range 1 Up Color<span style="margin-left:8px;font-size:12.2px">(In:34)</span></div>
<div class="t" style="left:774px;top:442px;font-size:12.3px;width:140px;overflow:hidden">R: 0, G: 0, B: 255</div>
<div class="a" style="left:445px;top:456px;width:469px;height:1px;background:#f0f0f0"></div>
<div class="a" style="left:769px;top:457px;width:145px;height:16px;background:#0080ff"></div>
<div class="t" style="left:449px;top:459px;font-size:13.2px">Column 2 Range 0 Up Color<span style="margin-left:8px;font-size:12.2px">(In:35)</span></div>
<div class="t" style="left:774px;top:459px;font-size:12.3px;width:140px;overflow:hidden">R: 0, G: 128, B: 255</div>
<div class="a" style="left:445px;top:473px;width:469px;height:1px;background:#f0f0f0"></div>
<div class="a" style="left:769px;top:474px;width:145px;height:16px;background:#ff8080"></div>
<div class="t" style="left:449px;top:476px;font-size:13.2px">Column 2 Range 0 Down Color<span style="margin-left:8px;font-size:12.2px">(In:36)</span></div>
<div class="t" style="left:774px;top:476px;font-size:12.3px;width:140px;overflow:hidden">R: 255, G: 128, B: 128</div>
<div class="a" style="left:914px;top:112px;width:17px;height:379px;background:#f0f0f0"></div>
<div class="a" style="left:915px;top:129px;width:15px;height:64px;background:#cdcdcd"></div>
<svg class="a" style="left:918px;top:118px" width="9" height="6"><path d="M1 5L4.5 1.5L8 5" stroke="#606060" stroke-width="1.6" fill="none"/></svg>
<svg class="a" style="left:918px;top:479px" width="9" height="6"><path d="M1 1L4.5 4.5L8 1" stroke="#606060" stroke-width="1.6" fill="none"/></svg>
<div class="a" style="left:445px;top:491px;width:486px;height:16px;background:#f0f0f0"></div>
<div class="a" style="left:462px;top:492px;width:422px;height:14px;background:#cdcdcd"></div>
<svg class="a" style="left:450px;top:495px" width="6" height="9"><path d="M5 1L1.5 4.5L5 8" stroke="#606060" stroke-width="1.6" fill="none"/></svg>
<svg class="a" style="left:902px;top:495px" width="6" height="9"><path d="M1 1L4.5 4.5L1 8" stroke="#606060" stroke-width="1.6" fill="none"/></svg>
<!-- groupbox -->
<div class="a" style="left:443px;top:524px;width:489px;height:47px;border:1px solid #a0a0a0;box-shadow:inset 1px 1px 0 #fff,1px 1px 0 #fff"></div>
<div class="a" style="left:449px;top:517px;width:191px;height:14px;background:#f0f0f0"></div>
<div class="t" style="left:452px;top:518px;font-size:13.18px">Column 1 Text Coloring Method</div>
<div class="a cmb" style="left:453px;top:537px;width:272px;height:22px"></div>
<div class="t" style="left:457px;top:541px;font-size:13.6px;width:250px;overflow:hidden">Based on Diagonal Dominant Side AskVol</div>
<div class="a dbtn" style="left:708px;top:539px;width:16px;height:18px"></div>
<svg class="a" style="left:712px;top:545px" width="9" height="5"><path d="M0 0H8L4 4Z" fill="#000"/></svg>
<!-- "..s" button right -->
<div class="a btn" style="left:860px;top:597px;width:91px;height:28px"></div>
<div class="t" style="left:936px;top:603px;font-size:13.4px">s</div>
<!-- dropdown list -->
<div class="a" style="left:453px;top:560px;width:484px;height:177px;background:#fff;border:1px solid #646464"></div>
<div class="a" style="left:454px;top:561px;width:465px;height:16px;background:#0078d7"></div>
<div class="t" style="left:456px;top:563px;font-size:13.6px;color:#fff">Based on Diagonal Dominant Side AskVol BidVol Percentage</div>
<div class="t" style="left:456px;top:579px;font-size:13.6px;color:#000">Based on Diagonal Dominant AskVol BidVol To Volume At Price Percentage</div>
<div class="t" style="left:456px;top:595px;font-size:13.6px;color:#000">Based on Diagonal Dominant AskVol BidVol Difference - Actual</div>
<div class="t" style="left:456px;top:611px;font-size:13.6px;color:#000">Based on AskVol BidVol Diagonal Difference Percentage of Bar Range</div>
<div class="t" style="left:456px;top:627px;font-size:13.6px;color:#000">Based on Volume - Actual</div>
<div class="t" style="left:456px;top:643px;font-size:13.6px;color:#000">Based on Trades - Actual</div>
<div class="t" style="left:456px;top:659px;font-size:13.6px;color:#000">Based on Dominant AskVol BidVol - Actual</div>
<div class="t" style="left:456px;top:675px;font-size:13.6px;color:#000">Based on AskVol BidVol Difference - Actual</div>
<div class="t" style="left:456px;top:691px;font-size:13.6px;color:#000">Based on Separate Ask Volume Bid Volume - Actual</div>
<div class="t" style="left:456px;top:707px;font-size:13.6px;color:#000">Based on Separate Diagonal AskVol BidVol Percentage</div>
<div class="t" style="left:456px;top:723px;font-size:13.6px;color:#000">Based on Separate AskVol BidVol Percentage</div>
<div class="a" style="left:919px;top:561px;width:17px;height:175px;background:#f0f0f0"></div>
<div class="a" style="left:920px;top:626px;width:15px;height:73px;background:#cdcdcd"></div>
<svg class="a" style="left:923px;top:566px" width="9" height="6"><path d="M1 5L4.5 1.5L8 5" stroke="#606060" stroke-width="1.6" fill="none"/></svg>
<svg class="a" style="left:923px;top:726px" width="9" height="6"><path d="M1 1L4.5 4.5L8 1" stroke="#606060" stroke-width="1.6" fill="none"/></svg>
</body></html>
